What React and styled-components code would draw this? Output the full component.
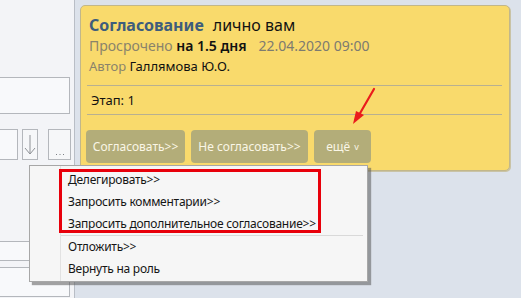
import React from "react";
import styled, { createGlobalStyle } from "styled-components";

const Global = createGlobalStyle`
  html, body { margin: 0; padding: 0; }
  body { font-family: "Noto Sans", "Open Sans", sans-serif; background: #dce2eb; }
  #root { width: 521px; height: 298px; overflow: hidden; }
`;

const Page = styled.div`
  position: relative;
  display: flex;
  width: 521px;
  height: 298px;
  background: #dce2eb;
  overflow: hidden;
`;

const Side = styled.div`
  width: 75px;
  flex: none;
  background: #f3f4f7;
  border-right: 1px solid #b9bec6;
  display: flex;
  flex-direction: column;
  padding-top: 77px;
  box-sizing: border-box;
`;

const Field = styled.div`
  box-sizing: border-box;
  width: ${(p) => p.$w}px;
  height: ${(p) => p.$h}px;
  background: #f8f9fb;
  border: 1px solid #b4b7bc;
  border-left: none;
  margin-top: ${(p) => p.$mt || 0}px;
`;

const FieldRow = styled.div`
  display: flex;
  gap: 4px;
  margin-top: 15px;
  height: 31px;
`;

const SmallBtn = styled.div`
  box-sizing: border-box;
  width: ${(p) => p.$w}px;
  height: 31px;
  border: 1px solid #b4b7bc;
  background: #f6f7f9;
  color: #8a8d92;
  font-size: 12px;
  display: flex;
  align-items: ${(p) => p.$align || "center"};
  justify-content: center;
  margin-left: ${(p) => p.$ml || 0}px;
`;

const Main = styled.div`
  flex: 1;
  padding: 5px 0 0 5px;
`;

const Card = styled.div`
  box-sizing: border-box;
  width: 430px;
  height: 166px;
  background: #f9da6c;
  border: 1px solid #c2b78a;
  border-radius: 5px;
  box-shadow: 1px 1px 0 #c9c3a6;
  display: flex;
  flex-direction: column;
`;

const Head = styled.div`
  padding: 9px 8px 0 8px;
`;

const Title = styled.div`
  line-height: 20px;
  font-size: 16px;
  color: #111;
  white-space: nowrap;
`;

const TitleStrong = styled.span`
  font-weight: 700;
  color: #3e5d7c;
  margin-right: 9px;
`;

const Line = styled.div`
  line-height: 20px;
  font-size: ${(p) => p.$fs}px;
  color: #111;
  white-space: nowrap;
  margin-top: ${(p) => p.$mt || 0}px;
`;

const Muted = styled.span`
  color: #8a836b;
`;

const Strong = styled.span`
  font-weight: 600;
`;

const DateText = styled.span`
  color: #7d7b70;
  margin-left: 12px;
`;

const Divider = styled.div`
  height: 1px;
  background: #b8b091;
  margin: ${(p) => p.$mt}px 7px 0 6px;
`;

const Stage = styled.div`
  height: 28px;
  display: flex;
  align-items: center;
  padding-left: 10px;
  font-size: 13px;
  color: #111;
`;

const Buttons = styled.div`
  display: flex;
  gap: 6px;
  padding-left: 5px;
  margin-top: 15px;
`;

const ActionBtn = styled.div`
  box-sizing: border-box;
  width: ${(p) => p.$w}px;
  height: 33px;
  background: #b3ad79;
  border-radius: 4px;
  color: #faf6e6;
  font-size: 12px;
  display: flex;
  align-items: center;
  justify-content: center;
  white-space: nowrap;
`;

const Chevron = styled.span`
  font-size: 9px;
  margin-left: 4px;
`;

const Menu = styled.div`
  position: absolute;
  left: 29px;
  top: 165px;
  width: 339px;
  height: 117px;
  box-sizing: border-box;
  background: #f6f6f6;
  border: 1px solid #a7a7a7;
  box-shadow: 3px 3px 1px rgba(90, 90, 90, 0.55);
  display: flex;
`;

const Gutter = styled.div`
  width: 30px;
  flex: none;
  border-right: 1px solid #e2e2e2;
`;

const Items = styled.div`
  flex: 1;
  display: flex;
  flex-direction: column;
  padding-top: 3px;
  padding-right: 4px;
`;

const Item = styled.div`
  height: 22px;
  line-height: 22px;
  padding-left: 7px;
  font-size: 12px;
  letter-spacing: -0.25px;
  color: #151515;
  white-space: nowrap;
`;

const MenuSep = styled.div`
  height: 1px;
  background: #d9d9d9;
`;

const Highlight = styled.div`
  position: absolute;
  left: 59px;
  top: 169px;
  width: 262px;
  height: 64px;
  box-sizing: border-box;
  border: 3px solid #e8000b;
  pointer-events: none;
`;

const Arrow = styled.svg`
  position: absolute;
  left: 345px;
  top: 85px;
`;

export default function App() {
  return (
    <Page>
      <Global />
      <Side>
        <Field $w={70} $h={37} />
        <FieldRow>
          <Field $w={18} $h={31} />
          <SmallBtn $w={16}>
            <svg width="12" height="24" viewBox="0 0 12 24">
              <path d="M6 2 V21 M1 15 L6 21 L11 15" stroke="#8e9196" strokeWidth="1" fill="none" />
            </svg>
          </SmallBtn>
          <SmallBtn $w={23} $ml={6} $align="flex-end">
            <svg width="10" height="8" viewBox="0 0 10 8">
              <rect x="1" y="3" width="1" height="1" fill="#7d8085" />
              <rect x="4.5" y="3" width="1" height="1" fill="#7d8085" />
              <rect x="8" y="3" width="1" height="1" fill="#7d8085" />
            </svg>
          </SmallBtn>
        </FieldRow>
        <Field $w={70} $h={20} $mt={81} />
        <Field $w={70} $h={30} $mt={6} />
      </Side>
      <Main>
        <Card>
          <Head>
            <Title>
              <TitleStrong>Согласование</TitleStrong>лично вам
            </Title>
            <Line $fs={14} $mt={1}>
              <Muted>Просрочено</Muted> <Strong>на 1.5 дня</Strong>
              <DateText>22.04.2020 09:00</DateText>
            </Line>
            <Line $fs={13}>
              <Muted>Автор</Muted> Галлямова Ю.О.
            </Line>
          </Head>
          <Divider $mt={9} />
          <Stage>Этап: 1</Stage>
          <Divider $mt={0} />
          <Buttons>
            <ActionBtn $w={99}>Согласовать&gt;&gt;</ActionBtn>
            <ActionBtn $w={117}>Не согласовать&gt;&gt;</ActionBtn>
            <ActionBtn $w={57}>
              ещё<Chevron>v</Chevron>
            </ActionBtn>
          </Buttons>
        </Card>
      </Main>
      <Menu>
        <Gutter />
        <Items>
          <Item>Делегировать&gt;&gt;</Item>
          <Item>Запросить комментарии&gt;&gt;</Item>
          <Item>Запросить дополнительное согласование&gt;&gt;</Item>
          <MenuSep />
          <Item>Отложить&gt;&gt;</Item>
          <Item>Вернуть на роль</Item>
        </Items>
      </Menu>
      <Highlight />
      <Arrow width="40" height="45" viewBox="0 0 40 45">
        <line x1="29" y1="4" x2="14" y2="30" stroke="#ea1c1c" strokeWidth="2.2" strokeLinecap="round" />
        <polygon points="8,39 11,26 19,30" fill="#ea1c1c" />
      </Arrow>
    </Page>
  );
}
